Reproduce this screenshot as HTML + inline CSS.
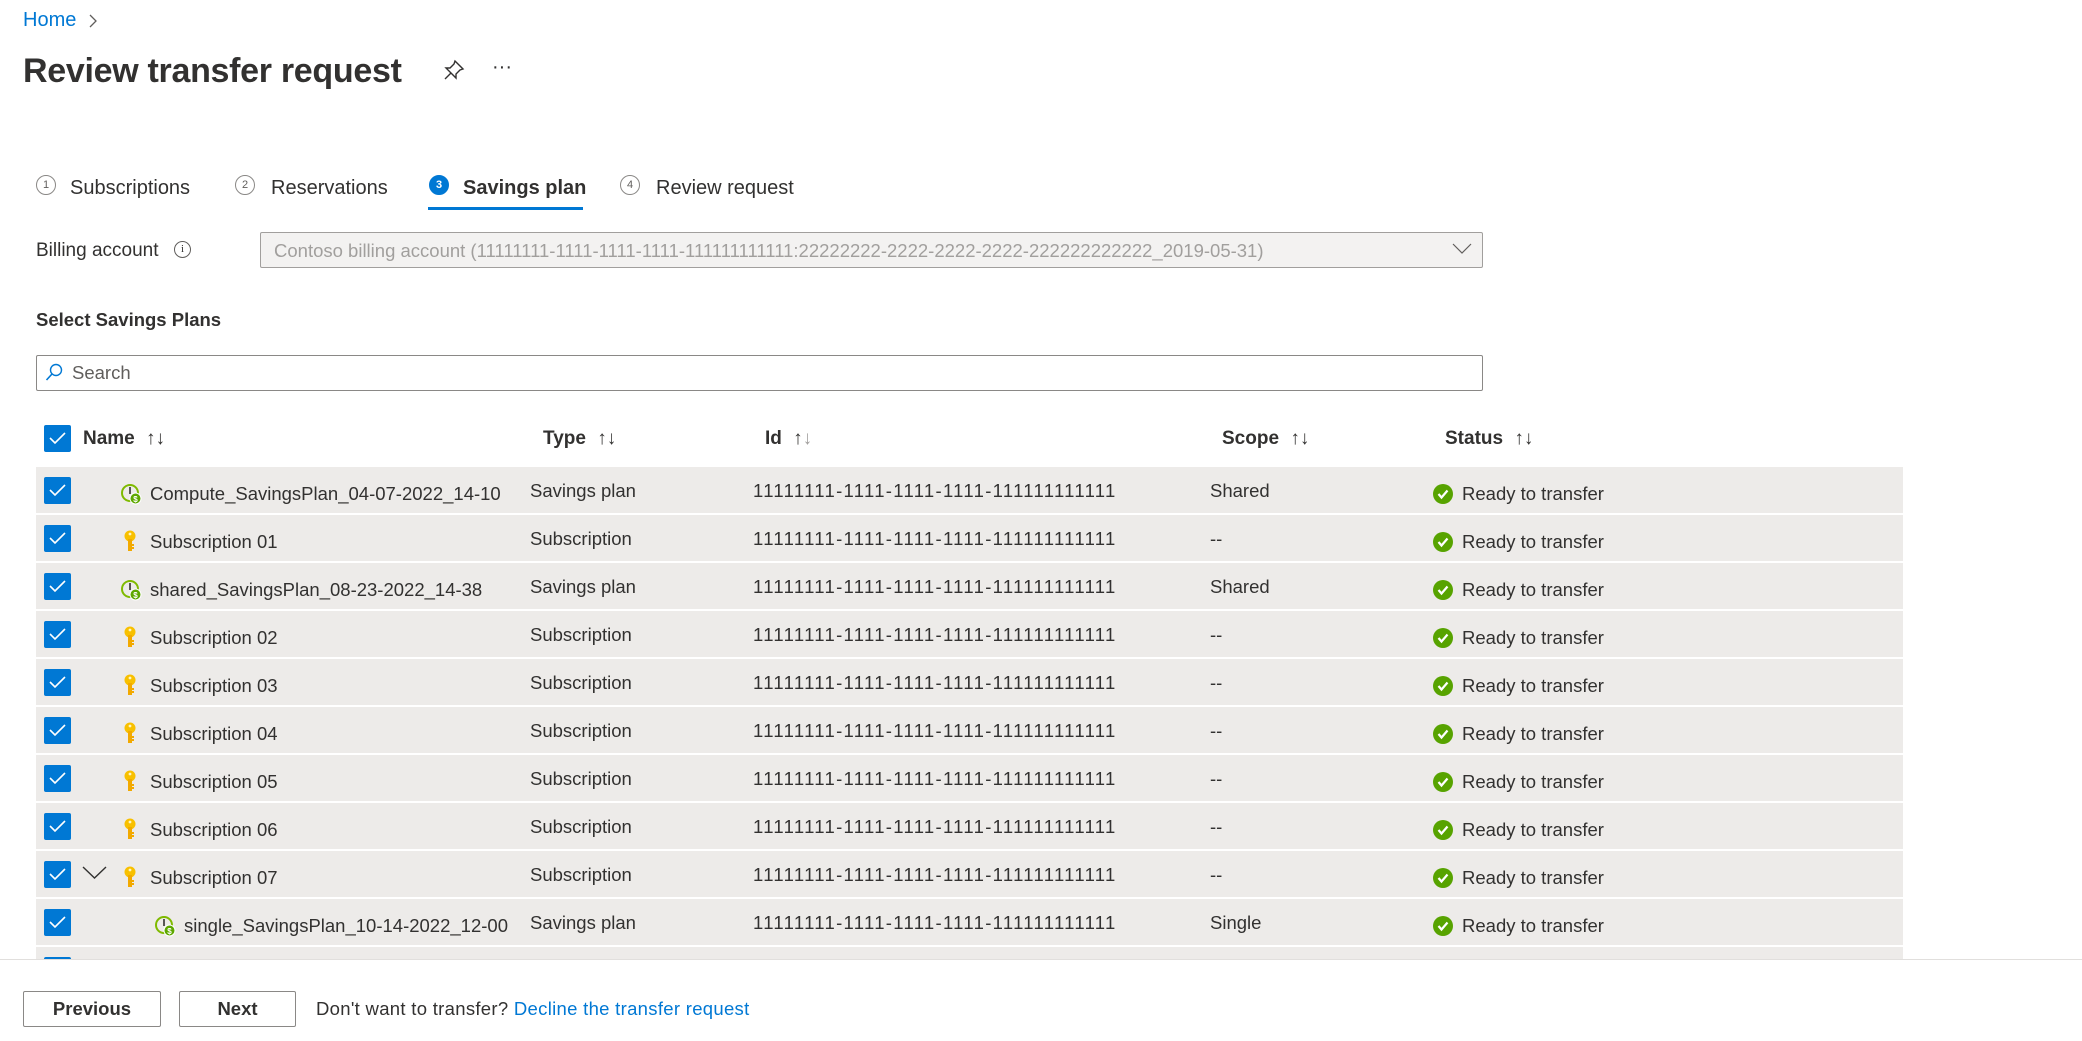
<!DOCTYPE html>
<html><head><meta charset="utf-8"><style>
*{margin:0;padding:0;box-sizing:border-box}
body{width:2082px;height:1041px;overflow:hidden;background:#fff;font-family:"Liberation Sans",sans-serif;color:#323130;position:relative}
.a{position:absolute;white-space:nowrap}
.cb{position:absolute;width:27px;height:27px;background:#0078d4;border-radius:2px}
.cb svg{position:absolute;left:4px;top:5px}
.row{position:absolute;left:36px;width:1867px;height:46px;background:#edebe9}
.t{position:absolute;font-size:18.5px;line-height:22px;top:16px;white-space:nowrap}
.row .t:nth-of-type(n+2){top:14px}
.id{letter-spacing:1.3px}
.hd{position:absolute;top:428px;font-size:19px;font-weight:bold;white-space:nowrap;color:#323130}
.tab{position:absolute;top:177px;font-size:20px;white-space:nowrap;color:#323130}
.circ{position:absolute;top:175px;width:20px;height:20px;border:1.3px solid #8a8886;border-radius:50%;font-size:11px;line-height:18px;text-align:center;color:#605e5c}
</style></head><body>
<div class="a" style="left:23px;top:9px;font-size:20px;color:#0078d4">Home</div>
<svg class="a" style="left:88px;top:13px" width="10" height="16"><path d="M2 2 L8 8 L2 14" fill="none" stroke="#605e5c" stroke-width="1.3"/></svg>
<div class="a" style="left:23px;top:52px;font-size:34px;font-weight:bold;color:#323130;letter-spacing:-0.3px">Review transfer request</div>
<svg class="a" style="left:443px;top:59px" width="22" height="22" viewBox="0 0 22 22"><path d="M12 2 L20 10 L17 11 L13 15 L13 19 L3 9 L7 9 L11 5 Z M8 14 L2 20" fill="none" stroke="#323130" stroke-width="1.4"/></svg>
<div class="a" style="left:492px;top:56px;font-size:20px;color:#323130">···</div>

<div class="circ" style="left:36px">1</div><div class="tab" style="left:70px">Subscriptions</div>
<div class="circ" style="left:235px">2</div><div class="tab" style="left:271px">Reservations</div>
<div class="circ" style="left:429px;background:#0078d4;border-color:#0078d4;color:#fff;font-weight:bold">3</div><div class="tab" style="left:463px;font-weight:bold">Savings plan</div>
<div class="a" style="left:428px;top:207px;width:155px;height:3px;background:#0078d4"></div>
<div class="circ" style="left:620px">4</div><div class="tab" style="left:656px">Review request</div>

<div class="a" style="left:36px;top:240px;font-size:19px">Billing account</div>
<div class="a" style="left:174px;top:241px;width:17px;height:17px;border:1.2px solid #605e5c;border-radius:50%;font-size:11px;line-height:15px;text-align:center;font-family:'Liberation Serif',serif">i</div>
<div class="a" style="left:260px;top:232px;width:1223px;height:36px;background:#f3f2f1;border:1px solid #a19f9d;border-radius:2px"></div>
<div class="a" style="left:274px;top:240px;font-size:18.5px;color:#a19f9d">Contoso billing account (11111111-1111-1111-1111-111111111111:22222222-2222-2222-2222-222222222222_2019-05-31)</div>
<svg class="a" style="left:1452px;top:243px" width="20" height="12"><path d="M1 1 L10 10 L19 1" fill="none" stroke="#605e5c" stroke-width="1.2"/></svg>

<div class="a" style="left:36px;top:309px;font-size:18.5px;font-weight:bold">Select Savings Plans</div>
<div class="a" style="left:36px;top:355px;width:1447px;height:36px;border:1px solid #8a8886;border-radius:2px"></div>
<svg class="a" style="left:45px;top:363px" width="18" height="20"><circle cx="11" cy="7" r="5.5" fill="none" stroke="#0078d4" stroke-width="1.4"/><path d="M7 11 L1.5 17" stroke="#0078d4" stroke-width="1.6"/></svg>
<div class="a" style="left:72px;top:362px;font-size:18.5px;color:#605e5c">Search</div>

<div class="cb" style="left:44px;top:425px"><svg width="19" height="16"><path d="M2 8 L7 13 L17 3" fill="none" stroke="#fff" stroke-width="1.6"/></svg></div>
<div class="hd" style="left:83px">Name <span style="font-weight:normal;margin-left:6px">↑↓</span></div>
<div class="hd" style="left:543px">Type <span style="font-weight:normal;margin-left:6px">↑↓</span></div>
<div class="hd" style="left:765px">Id <span style="font-weight:normal;margin-left:6px;color:#323130">↑<span style="color:#a19f9d">↓</span></span></div>
<div class="hd" style="left:1222px">Scope <span style="font-weight:normal;margin-left:6px">↑↓</span></div>
<div class="hd" style="left:1445px">Status <span style="font-weight:normal;margin-left:6px">↑↓</span></div>

<svg width="0" height="0" style="position:absolute"><defs>
<g id="clk"><circle cx="10" cy="10" r="8" fill="none" stroke="#7fba00" stroke-width="2"/><path d="M10 4 L10 11" stroke="#323130" stroke-width="1.6"/><circle cx="15.5" cy="15.5" r="5.5" fill="#5ea800" stroke="#fff" stroke-width="1"/><text x="15.5" y="19" font-size="8" text-anchor="middle" fill="#fff" font-family="Liberation Sans" font-weight="bold">$</text></g>
<g id="key"><circle cx="8" cy="6" r="5.5" fill="#f8c000"/><rect x="6" y="9" width="4" height="12" fill="#f2a900"/><rect x="9" y="14" width="3" height="2" fill="#f2a900"/><rect x="9" y="17" width="3" height="2" fill="#f2a900"/><circle cx="8" cy="4" r="1.4" fill="#fff5c0"/></g>
<g id="ok"><circle cx="10" cy="10" r="10" fill="#57a300"/><path d="M5.5 10 L8.5 13.5 L14.5 6.5" fill="none" stroke="#fff" stroke-width="2.2"/></g>
<g id="ck"><path d="M2 8 L7 13 L17 3" fill="none" stroke="#fff" stroke-width="1.6"/></g>
</defs></svg>

<div class="row" style="top:467px"><div class="cb" style="left:8px;top:10px"><svg width="19" height="16"><use href="#ck"/></svg></div><svg class="a" style="left:84px;top:16px" width="22" height="22"><use href="#clk"/></svg><div class="t" style="left:114px;top:16px">Compute_SavingsPlan_04-07-2022_14-10</div><div class="t" style="left:494px;top:13px">Savings plan</div><div class="t id" style="left:717px;top:13px">11111111-1111-1111-1111-111111111111</div><div class="t" style="left:1174px;top:13px">Shared</div><svg class="a" style="left:1397px;top:17px" width="20" height="20"><use href="#ok"/></svg><div class="t" style="left:1426px;top:16px">Ready to transfer</div></div>
<div class="row" style="top:515px"><div class="cb" style="left:8px;top:10px"><svg width="19" height="16"><use href="#ck"/></svg></div><svg class="a" style="left:86px;top:15px" width="16" height="24"><use href="#key"/></svg><div class="t" style="left:114px;top:16px">Subscription 01</div><div class="t" style="left:494px;top:13px">Subscription</div><div class="t id" style="left:717px;top:13px">11111111-1111-1111-1111-111111111111</div><div class="t" style="left:1174px;top:13px">--</div><svg class="a" style="left:1397px;top:17px" width="20" height="20"><use href="#ok"/></svg><div class="t" style="left:1426px;top:16px">Ready to transfer</div></div>
<div class="row" style="top:563px"><div class="cb" style="left:8px;top:10px"><svg width="19" height="16"><use href="#ck"/></svg></div><svg class="a" style="left:84px;top:16px" width="22" height="22"><use href="#clk"/></svg><div class="t" style="left:114px;top:16px">shared_SavingsPlan_08-23-2022_14-38</div><div class="t" style="left:494px;top:13px">Savings plan</div><div class="t id" style="left:717px;top:13px">11111111-1111-1111-1111-111111111111</div><div class="t" style="left:1174px;top:13px">Shared</div><svg class="a" style="left:1397px;top:17px" width="20" height="20"><use href="#ok"/></svg><div class="t" style="left:1426px;top:16px">Ready to transfer</div></div>
<div class="row" style="top:611px"><div class="cb" style="left:8px;top:10px"><svg width="19" height="16"><use href="#ck"/></svg></div><svg class="a" style="left:86px;top:15px" width="16" height="24"><use href="#key"/></svg><div class="t" style="left:114px;top:16px">Subscription 02</div><div class="t" style="left:494px;top:13px">Subscription</div><div class="t id" style="left:717px;top:13px">11111111-1111-1111-1111-111111111111</div><div class="t" style="left:1174px;top:13px">--</div><svg class="a" style="left:1397px;top:17px" width="20" height="20"><use href="#ok"/></svg><div class="t" style="left:1426px;top:16px">Ready to transfer</div></div>
<div class="row" style="top:659px"><div class="cb" style="left:8px;top:10px"><svg width="19" height="16"><use href="#ck"/></svg></div><svg class="a" style="left:86px;top:15px" width="16" height="24"><use href="#key"/></svg><div class="t" style="left:114px;top:16px">Subscription 03</div><div class="t" style="left:494px;top:13px">Subscription</div><div class="t id" style="left:717px;top:13px">11111111-1111-1111-1111-111111111111</div><div class="t" style="left:1174px;top:13px">--</div><svg class="a" style="left:1397px;top:17px" width="20" height="20"><use href="#ok"/></svg><div class="t" style="left:1426px;top:16px">Ready to transfer</div></div>
<div class="row" style="top:707px"><div class="cb" style="left:8px;top:10px"><svg width="19" height="16"><use href="#ck"/></svg></div><svg class="a" style="left:86px;top:15px" width="16" height="24"><use href="#key"/></svg><div class="t" style="left:114px;top:16px">Subscription 04</div><div class="t" style="left:494px;top:13px">Subscription</div><div class="t id" style="left:717px;top:13px">11111111-1111-1111-1111-111111111111</div><div class="t" style="left:1174px;top:13px">--</div><svg class="a" style="left:1397px;top:17px" width="20" height="20"><use href="#ok"/></svg><div class="t" style="left:1426px;top:16px">Ready to transfer</div></div>
<div class="row" style="top:755px"><div class="cb" style="left:8px;top:10px"><svg width="19" height="16"><use href="#ck"/></svg></div><svg class="a" style="left:86px;top:15px" width="16" height="24"><use href="#key"/></svg><div class="t" style="left:114px;top:16px">Subscription 05</div><div class="t" style="left:494px;top:13px">Subscription</div><div class="t id" style="left:717px;top:13px">11111111-1111-1111-1111-111111111111</div><div class="t" style="left:1174px;top:13px">--</div><svg class="a" style="left:1397px;top:17px" width="20" height="20"><use href="#ok"/></svg><div class="t" style="left:1426px;top:16px">Ready to transfer</div></div>
<div class="row" style="top:803px"><div class="cb" style="left:8px;top:10px"><svg width="19" height="16"><use href="#ck"/></svg></div><svg class="a" style="left:86px;top:15px" width="16" height="24"><use href="#key"/></svg><div class="t" style="left:114px;top:16px">Subscription 06</div><div class="t" style="left:494px;top:13px">Subscription</div><div class="t id" style="left:717px;top:13px">11111111-1111-1111-1111-111111111111</div><div class="t" style="left:1174px;top:13px">--</div><svg class="a" style="left:1397px;top:17px" width="20" height="20"><use href="#ok"/></svg><div class="t" style="left:1426px;top:16px">Ready to transfer</div></div>
<div class="row" style="top:851px"><div class="cb" style="left:8px;top:10px"><svg width="19" height="16"><use href="#ck"/></svg></div><svg class="a" style="left:45px;top:14px" width="28" height="16"><path d="M2 2 L13.5 13 L25 2" fill="none" stroke="#323130" stroke-width="1.4"/></svg><svg class="a" style="left:86px;top:15px" width="16" height="24"><use href="#key"/></svg><div class="t" style="left:114px;top:16px">Subscription 07</div><div class="t" style="left:494px;top:13px">Subscription</div><div class="t id" style="left:717px;top:13px">11111111-1111-1111-1111-111111111111</div><div class="t" style="left:1174px;top:13px">--</div><svg class="a" style="left:1397px;top:17px" width="20" height="20"><use href="#ok"/></svg><div class="t" style="left:1426px;top:16px">Ready to transfer</div></div>
<div class="row" style="top:899px"><div class="cb" style="left:8px;top:10px"><svg width="19" height="16"><use href="#ck"/></svg></div><svg class="a" style="left:118px;top:16px" width="22" height="22"><use href="#clk"/></svg><div class="t" style="left:148px;top:16px">single_SavingsPlan_10-14-2022_12-00</div><div class="t" style="left:494px;top:13px">Savings plan</div><div class="t id" style="left:717px;top:13px">11111111-1111-1111-1111-111111111111</div><div class="t" style="left:1174px;top:13px">Single</div><svg class="a" style="left:1397px;top:17px" width="20" height="20"><use href="#ok"/></svg><div class="t" style="left:1426px;top:16px">Ready to transfer</div></div>
<div class="row" style="top:947px"><div class="cb" style="left:8px;top:10px"></div></div>

<div class="a" style="left:0;top:959px;width:2082px;height:82px;background:#fff;border-top:1px solid #e1dfdd"></div>
<div class="a" style="left:23px;top:991px;width:138px;height:36px;border:1px solid #8a8886;border-radius:2px;font-size:18.5px;font-weight:bold;text-align:center;line-height:34px">Previous</div>
<div class="a" style="left:179px;top:991px;width:117px;height:36px;border:1px solid #8a8886;border-radius:2px;font-size:18.5px;font-weight:bold;text-align:center;line-height:34px">Next</div>
<div class="a" style="left:316px;top:998px;font-size:18.5px;letter-spacing:0.3px">Don't want to transfer? <span style="color:#0078d4">Decline the transfer request</span></div>
</body></html>
